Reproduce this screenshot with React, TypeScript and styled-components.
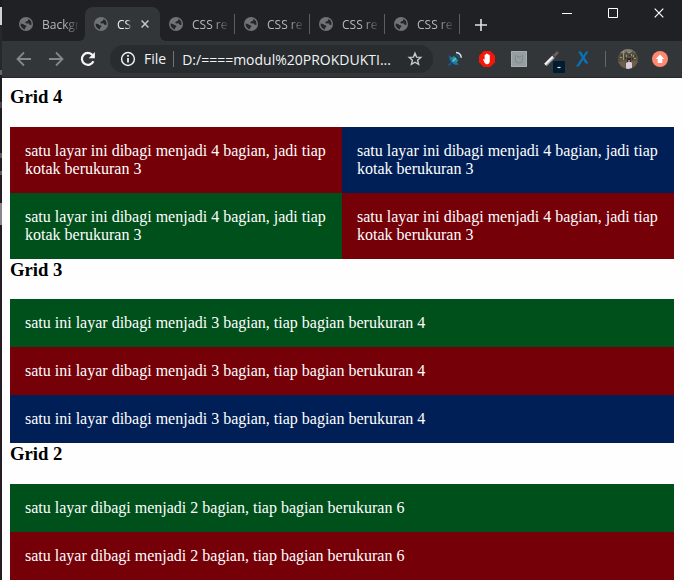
import React from "react";
import styled, { createGlobalStyle } from "styled-components";

const GlobalStyle = createGlobalStyle`
  * { box-sizing: border-box; }
  html, body { margin: 0; padding: 0; }
  body { background: #fefefe; overflow: hidden; }
  svg { flex: none; }
`;

const colors = { red: "#750008", blue: "#001f57", green: "#00501b" };
type Tone = keyof typeof colors;

const Desktop = styled.div`
  display: grid;
  grid-template-columns: 2px minmax(0, 1fr);
  min-height: 100vh;
  overflow: hidden;
`;

const BackWindow = styled.div`
  background: linear-gradient(
    #1b1b1e 0 7px, #d2d2d2 7px 25px, #26282b 25px 70px, #66686a 70px 75px,
    #1f1c22 75px 102px, #45424a 102px 108px, #1f1c22 108px 153px,
    #5c5960 153px 158px, #251c22 158px 171px, #5c5960 171px 175px,
    #251c22 175px 203px, #88868c 203px 225px, #251c22 225px
  );
`;

const Browser = styled.div`
  display: flex;
  flex-direction: column;
  font-family: "Open Sans", "Noto Sans", sans-serif;
  background: #fefefe;
`;

const TitleBar = styled.header`
  display: flex;
  justify-content: space-between;
  height: 41px;
  background: #202124;
`;

const TabStrip = styled.div`
  display: flex;
  align-items: flex-end;
  padding-left: 8px;
`;

const Tab = styled.button<{ $divided?: boolean }>`
  position: relative;
  display: flex;
  align-items: center;
  gap: 9px;
  width: 75px;
  height: 34px;
  padding: 0 0 0 9px;
  border: 0;
  background: transparent;
  color: #b4b8bc;
  font: 12px "Open Sans", sans-serif;
  &::after {
    content: "";
    display: ${(p) => (p.$divided ? "block" : "none")};
    position: absolute;
    right: 0;
    top: 7px;
    width: 1px;
    height: 20px;
    background: #5a5d61;
  }
`;

const ActiveTab = styled(Tab)`
  border-radius: 8px 8px 0 0;
  background: #323639;
  color: #f1f3f4;
  &::before,
  &::after {
    content: "";
    display: block;
    position: absolute;
    top: auto;
    bottom: 0;
    width: 6px;
    height: 6px;
  }
  &::before {
    left: -6px;
    background: radial-gradient(circle at 0 0, transparent 6px, #323639 6px);
  }
  &::after {
    right: -6px;
    background: radial-gradient(circle at 100% 0, transparent 6px, #323639 6px);
  }
`;

const TabTitle = styled.span<{ $short?: boolean }>`
  flex: none;
  width: ${(p) => (p.$short ? 15 : 36)}px;
  overflow: hidden;
  white-space: nowrap;
  text-align: left;
  mask-image: linear-gradient(to right, #000 60%, rgba(0, 0, 0, 0.15));
`;

const IconButton = styled.button`
  display: grid;
  place-items: center;
  flex: none;
  width: 32px;
  height: 32px;
  padding: 0;
  border: 0;
  background: transparent;
  color: #dfe1e3;
`;

const NewTab = styled(IconButton)`
  margin-left: 5px;
`;

const WindowControls = styled.div`
  display: flex;
  height: 26px;
`;

const WindowButton = styled(IconButton)`
  width: 46px;
  height: 26px;
  color: #fff;
`;

const Toolbar = styled.nav`
  display: flex;
  align-items: center;
  height: 37px;
  padding: 0 6px;
  background: #323639;
  border-bottom: 1px solid #27292c;
`;

const Address = styled.label`
  display: flex;
  align-items: center;
  flex: 1;
  min-width: 0;
  height: 28px;
  margin-left: 6px;
  padding: 0 10px;
  border-radius: 14px;
  background: #282c2f;
  color: #f1f3f4;
  font-size: 14px;
`;

const Scheme = styled.span`
  margin-left: 8px;
  padding-right: 7px;
  border-right: 1px solid #707477;
  line-height: 16px;
`;

const UrlInput = styled.input`
  flex: 1;
  min-width: 0;
  margin-left: 8px;
  padding: 0;
  border: 0;
  outline: 0;
  background: transparent;
  color: #f1f3f4;
  font: 14px "Open Sans", sans-serif;
  text-overflow: ellipsis;
`;

const Extensions = styled.div`
  display: flex;
  align-items: center;
  margin-left: 6px;
`;

const Divider = styled.span`
  width: 1px;
  height: 16px;
  margin: 0 6px;
  background: #66696c;
`;

const Page = styled.main`
  padding: 8px 8px 0;
  font: 16px/18px "Liberation Serif", "Times New Roman", serif;
`;

const Heading = styled.h3`
  margin: 0 0 1em;
  line-height: 22px;
  color: #000;
`;

const Grid = styled.section<{ $columns: number }>`
  display: grid;
  grid-template-columns: repeat(${(p) => p.$columns}, minmax(0, 1fr));
`;

const Cell = styled.div<{ $tone: Tone }>`
  padding: 15px;
  background: ${(p) => colors[p.$tone]};
  color: #fff;
`;

const Globe = () => (
  <svg width="14" height="14" viewBox="0 0 14 14" aria-hidden="true">
    <circle cx="7" cy="7" r="7" fill="#6f7377" />
    <path d="M1.6 6.4 4 7l1.8 1.2 1.5.3v1.2L6 11v1.4A5.5 5.5 0 0 1 1.6 6.4ZM6.6 1.6l3 .5L8.8 4 7 4.6 6.2 6l1.6.6 1.7-.4 1 1.5 1.9.2A5.5 5.5 0 0 0 9.6 2.1Z" fill="#242629" />
  </svg>
);

const Close = ({ size = 8, weight = 1.9, color = "#c3c6c8" }: { size?: number; weight?: number; color?: string }) => (
  <svg width={size} height={size} viewBox="0 0 10 10" fill="none" stroke={color} strokeWidth={weight}>
    <path d="m.7.7 8.6 8.6m0-8.6L.7 9.3" />
  </svg>
);

const Arrow = ({ forward = false }: { forward?: boolean }) => (
  <svg width="16" height="16" viewBox="0 0 16 16" fill="none" stroke="#85888b" strokeWidth="1.8">
    <path d={forward ? "M1 8h13M8 1.5 14.5 8 8 14.5" : "M15 8H2m6-6.5L1.5 8 8 14.5"} />
  </svg>
);

const Reload = () => (
  <svg width="16" height="16" viewBox="0 0 16 16" fill="none" stroke="#f5f6f6" strokeWidth="2.2">
    <path d="M13.4 10.3A6 6 0 1 1 12.5 4" />
    <path d="M14.9 1v6.2H8.7Z" fill="#f5f6f6" stroke="none" />
  </svg>
);

const Info = () => (
  <svg width="16" height="16" viewBox="0 0 16 16" fill="none" stroke="#eceeef">
    <circle cx="8" cy="8" r="6.4" strokeWidth="1.5" />
    <path d="M8 7v4.5M8 4v1.7" strokeWidth="1.8" />
  </svg>
);

const Star = () => (
  <svg width="16" height="16" viewBox="0 0 16 16" fill="none" stroke="#c8cacc" strokeWidth="1.4">
    <path d="m8 2.2 1.6 3.9 4.2.3-3.2 2.8 1 4.2L8 11.2l-3.6 2.2 1-4.2-3.2-2.8 4.2-.3Z" />
  </svg>
);

const Satellite = () => (
  <svg width="16" height="16" viewBox="0 0 16 16" fill="none">
    <path d="M2 3.5C.8 9 5 14.5 12 14.2L9 12 4 7Z" fill="#155591" />
    <path d="m2.5 4.5 9.5 9-4 .2C4.5 12 2.5 9 2.5 4.5Z" fill="#1c72ab" />
    <path d="m4 7 3-2 4.5 4.5L9 12Z" fill="#23919c" />
    <path d="M5.5 10.5 9 7" stroke="#5fd0bd" strokeWidth="1.4" />
    <path d="M9 1.6c3 .2 5 2.200 5.300 5.200" stroke="#d7e5ec" strokeWidth="1.5" />
    <path d="M8.5 4c1.800.1 3 1.300 3.300 3.200" stroke="#17568b" strokeWidth="1.6" />
    <path d="m1.6 14.4 2.4-2.4" stroke="#155591" strokeWidth="2.2" />
  </svg>
);

const AdBlock = () => (
  <svg width="16" height="16" viewBox="0 0 16 16">
    <path d="M4.7 0h6.6L16 4.7v6.6L11.3 16H4.7L0 11.3V4.7Z" fill="#f5180a" />
    <path d="M4 8.2c.9-.3 1.3.2 1.6.8V4c0-.8 1.2-.8 1.3 0V3c0-.8 1.2-.8 1.3 0v.2c.1-.8 1.2-.7 1.3.1v1c.1-.7 1.3-.7 1.3.1v5.3c0 2-1 3.5-2.7 3.5C5.7 13.2 5.3 10.6 4 8.2Z" fill="#fff" />
  </svg>
);

const GreyTool = () => (
  <svg width="16" height="16" viewBox="0 0 16 16" fill="none">
    <path d="M0 0h16v16H0Z" fill="#979ea2" />
    <path d="M.5.5h15v15H.5Z" stroke="#a9aeb1" />
    <path d="M4.5 4v4.5a3.5 3.5 0 0 0 7 0V4M6 5l2 1.500L10 5" stroke="#838b8f" strokeWidth="1.2" />
  </svg>
);

const Picker = () => (
  <svg width="28" height="28" viewBox="0 0 28 28" fill="none">
    <path d="m8.500 20 8-8" stroke="#969ca0" strokeWidth="3.4" />
    <path d="m8 19.500 8-8" stroke="#f4f4f4" strokeWidth="2.2" />
    <path d="m16.500 11.500 4.500-4.500" stroke="#6a6060" strokeWidth="2.6" />
    <path d="m15 9.500 3.500 3.500" stroke="#514c4d" strokeWidth="1.4" />
    <rect x="16" y="16" width="12" height="12" rx="1" fill="#001c30" />
    <path d="M20.500 22.500h3" stroke="#e4ecf0" strokeWidth="1.2" />
  </svg>
);

const BlueX = () => (
  <svg width="14" height="16" viewBox="0 0 14 16" fill="none">
    <path d="M2 .5h3L12.500 12.500H9.500Z" fill="#0871b8" />
    <path d="M12.500.5H10L0 15.500h2.800Z" fill="#0871b8" />
  </svg>
);

const Avatar = () => (
  <svg width="20" height="20" viewBox="0 0 20 20">
    <clipPath id="avatar"><circle cx="10" cy="10" r="10" /></clipPath>
    <g clipPath="url(#avatar)">
      <path d="M0 0h20v20H0Z" fill="#5f5947" />
      <path d="M0 0h20v4H0Z" fill="#827f74" />
      <path d="m0 7 3-3 3 2 2-4 3 3 4-3 5 5v5l-4 1-3-3-3 2-5-1-5 3Z" fill="#565040" />
      <path d="M5 2h1v9H5ZM2 8h2v1H2ZM13 5h1v2h-1ZM16 9h2v1h-2ZM10 3h2v1h-2ZM8 6h1v2H8ZM15 6h1v2h-1Z" fill="#9c9284" />
      <path d="M3 6h1v1H3ZM7 8h1v2H7ZM11 6h2v1h-2ZM17 6h1v2h-1ZM14 9h1v2h-1Z" fill="#38342a" />
      <path d="M0 13h7v7H0ZM14 12h6v8h-6Z" fill="#6c5d4d" />
      <path d="M9 9h4v4H9Z" fill="#2f2928" />
      <path d="m8 14 2-1h3l1 1v6H8Z" fill="#dccbd9" />
      <path d="M10 11h2v2h-2Z" fill="#a07a68" />
    </g>
  </svg>
);

const Update = () => (
  <svg width="16" height="16" viewBox="0 0 16 16">
    <circle cx="8" cy="8" r="8" fill="#ff8970" />
    <path d="m8 3.500 4.300 4.500H10.300V12H5.700V8H3.700Z" fill="#fff" />
  </svg>
);

const inactiveTabs = ["CSS re", "CSS re", "CSS re", "CSS re"];

const sections: { title: string; columns: number; text: string; tones: Tone[] }[] = [
  {
    title: "Grid 4",
    columns: 2,
    text: "satu layar ini dibagi menjadi 4 bagian, jadi tiap kotak berukuran 3",
    tones: ["red", "blue", "green", "red"],
  },
  {
    title: "Grid 3",
    columns: 1,
    text: "satu ini layar dibagi menjadi 3 bagian, tiap bagian berukuran 4",
    tones: ["green", "red", "blue"],
  },
  {
    title: "Grid 2",
    columns: 1,
    text: "satu layar dibagi menjadi 2 bagian, tiap bagian berukuran 6",
    tones: ["green", "red"],
  },
];

export default function App() {
  return (
    <Desktop>
      <GlobalStyle />
      <BackWindow />
      <Browser>
        <TitleBar>
          <TabStrip>
            <Tab>
              <Globe />
              <TabTitle>Backgr</TabTitle>
            </Tab>
            <ActiveTab>
              <Globe />
              <TabTitle $short>CSS</TabTitle>
              <Close />
            </ActiveTab>
            {inactiveTabs.map((title, i) => (
              <Tab key={i} $divided>
                <Globe />
                <TabTitle>{title}</TabTitle>
              </Tab>
            ))}
            <NewTab aria-label="New tab">
              <svg width="12" height="12" viewBox="0 0 12 12" stroke="currentColor" strokeWidth="1.6">
                <path d="M6 0v12M0 6h12" />
              </svg>
            </NewTab>
          </TabStrip>
          <WindowControls>
            <WindowButton aria-label="Minimize">
              <svg width="10" height="10" stroke="currentColor"><path d="M0 5.500h10" /></svg>
            </WindowButton>
            <WindowButton aria-label="Maximize">
              <svg width="10" height="10" fill="none" stroke="currentColor"><path d="M.5.5h9v9h-9Z" /></svg>
            </WindowButton>
            <WindowButton aria-label="Close"><Close size={10} weight={1.2} color="#fff" /></WindowButton>
          </WindowControls>
        </TitleBar>
        <Toolbar>
          <IconButton aria-label="Back"><Arrow /></IconButton>
          <IconButton aria-label="Forward"><Arrow forward /></IconButton>
          <IconButton aria-label="Reload"><Reload /></IconButton>
          <Address>
            <Info />
            <Scheme>File</Scheme>
            <UrlInput aria-label="Address" readOnly value="D:/====modul%20PROKDUKTI..." />
            <Star />
          </Address>
          <Extensions>
            <IconButton aria-label="Satellite"><Satellite /></IconButton>
            <IconButton aria-label="Ad blocker"><AdBlock /></IconButton>
            <IconButton aria-label="Extension"><GreyTool /></IconButton>
            <IconButton aria-label="Color picker"><Picker /></IconButton>
            <IconButton aria-label="X extension"><BlueX /></IconButton>
            <Divider />
            <IconButton aria-label="Profile"><Avatar /></IconButton>
            <IconButton aria-label="Update browser"><Update /></IconButton>
          </Extensions>
        </Toolbar>
        <Page>
          {sections.map((s) => (
            <React.Fragment key={s.title}>
              <Heading>{s.title}</Heading>
              <Grid $columns={s.columns}>
                {s.tones.map((tone, i) => <Cell key={i} $tone={tone}>{s.text}</Cell>)}
              </Grid>
            </React.Fragment>
          ))}
        </Page>
      </Browser>
    </Desktop>
  );
}
